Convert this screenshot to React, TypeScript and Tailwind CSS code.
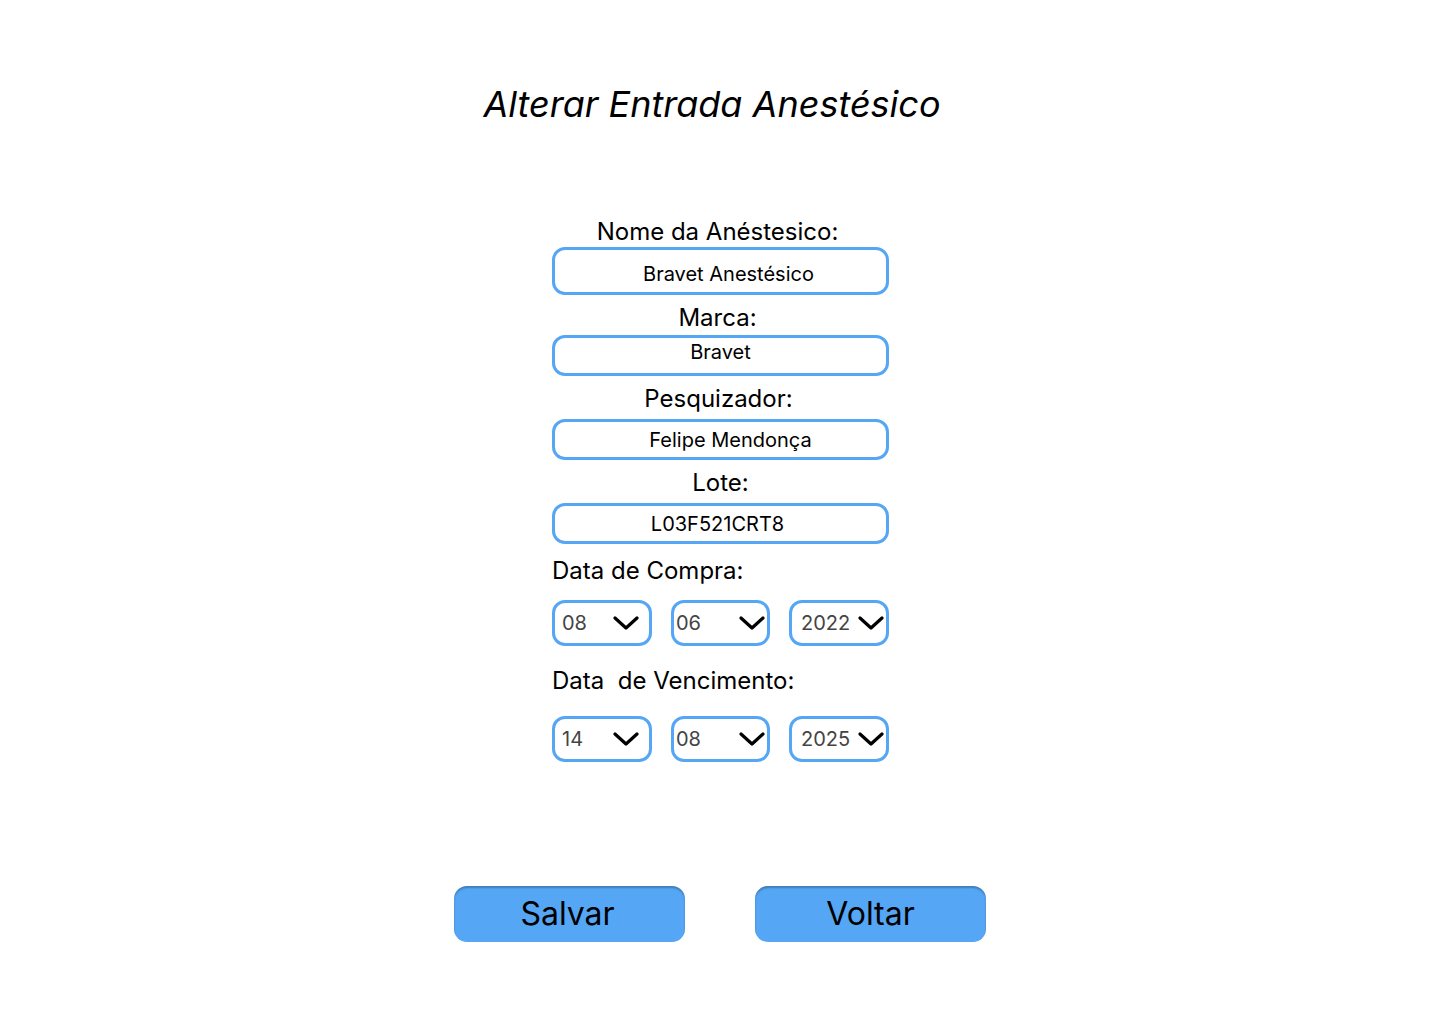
const font = { fontFamily: 'Inter, "Noto Sans", sans-serif' };

function Chevron() {
  return (
    <svg width="26" height="16" viewBox="0 0 26 16" fill="none" className="shrink-0">
      <path d="M2 3 L13 13 L24 3" stroke="black" strokeWidth="3.2" strokeLinecap="round" strokeLinejoin="round" />
    </svg>
  );
}

function Field({
  label,
  value,
  boxClass,
  labelClass,
}: {
  label: string;
  value: string;
  boxClass: string;
  labelClass: string;
}) {
  return (
    <div className="flex flex-col items-center">
      <span className={`text-[24px] leading-[29px] text-black ${labelClass}`}>{label}</span>
      <div
        className={`w-[337px] rounded-[13px] border-[3px] border-[#55a6f5] bg-white text-[20px] leading-[26px] text-black text-center ${boxClass}`}
      >
        {value}
      </div>
    </div>
  );
}

function Select({ value, boxClass }: { value: string; boxClass: string }) {
  return (
    <div className={`h-[46px] rounded-[13px] border-[3px] border-[#55a6f5] bg-white flex items-center justify-between ${boxClass}`}>
      <span className="text-[20px] text-[#444]">{value}</span>
      <Chevron />
    </div>
  );
}

function DateRow({ label, values, labelClass }: { label: string; values: [string, string, string]; labelClass: string }) {
  return (
    <div className="flex flex-col">
      <span className={`text-[24px] leading-[29px] text-black whitespace-pre ${labelClass}`}>{label}</span>
      <div className="flex justify-between">
        <Select value={values[0]} boxClass="w-[100px] pl-[7px] pr-[10px]" />
        <Select value={values[1]} boxClass="w-[99px] pl-[2px] pr-[2px]" />
        <Select value={values[2]} boxClass="w-[100px] pl-[9px] pr-[2px]" />
      </div>
    </div>
  );
}

export default function App() {
  return (
    <div style={font} className="w-[1440px] h-[1024px] bg-white flex flex-col items-center">
      <h1 className="mt-[80px] text-[36px] leading-[48px] italic font-normal text-black mr-[16px]">
        Alterar Entrada Anestésico
      </h1>

      <div className="mt-[89px] w-[337px] flex flex-col gap-[8px] ml-[1px]">
        <Field
          label="Nome da Anéstesico:"
          value="Bravet Anestésico"
          labelClass="mb-[1px] pr-[6px]"
          boxClass="h-[48px] pt-[11px] pl-[16px]"
        />
        <Field label="Marca:" value="Bravet" labelClass="mb-[3px] pr-[6px]" boxClass="h-[41px] pt-[1px]" />
        <Field
          label="Pesquizador:"
          value="Felipe Mendonça"
          labelClass="mb-[6px] pr-[4px]"
          boxClass="h-[41px] pt-[5px] pl-[20px]"
        />
        <Field label="Lote:" value="L03F521CRT8" labelClass="mb-[6px]" boxClass="h-[41px] pt-[5px] pr-[6px]" />
        <div className="flex flex-col gap-[20px] mt-[4px]">
          <DateRow label="Data de Compra:" values={['08', '06', '2022']} labelClass="mb-[15px]" />
          <DateRow label="Data  de Vencimento:" values={['14', '08', '2025']} labelClass="mb-[21px]" />
        </div>
      </div>

      <div className="mt-[124px] flex gap-[70px]">
        <button className="w-[231px] h-[56px] rounded-[13px] bg-[#55a6f5] shadow-[inset_0_2px_2px_rgba(0,0,0,0.25)] text-[32px] text-black pr-[4px]">
          Salvar
        </button>
        <button className="w-[231px] h-[56px] rounded-[13px] bg-[#55a6f5] shadow-[inset_0_2px_2px_rgba(0,0,0,0.25)] text-[32px] text-black">
          Voltar
        </button>
      </div>
    </div>
  );
}
